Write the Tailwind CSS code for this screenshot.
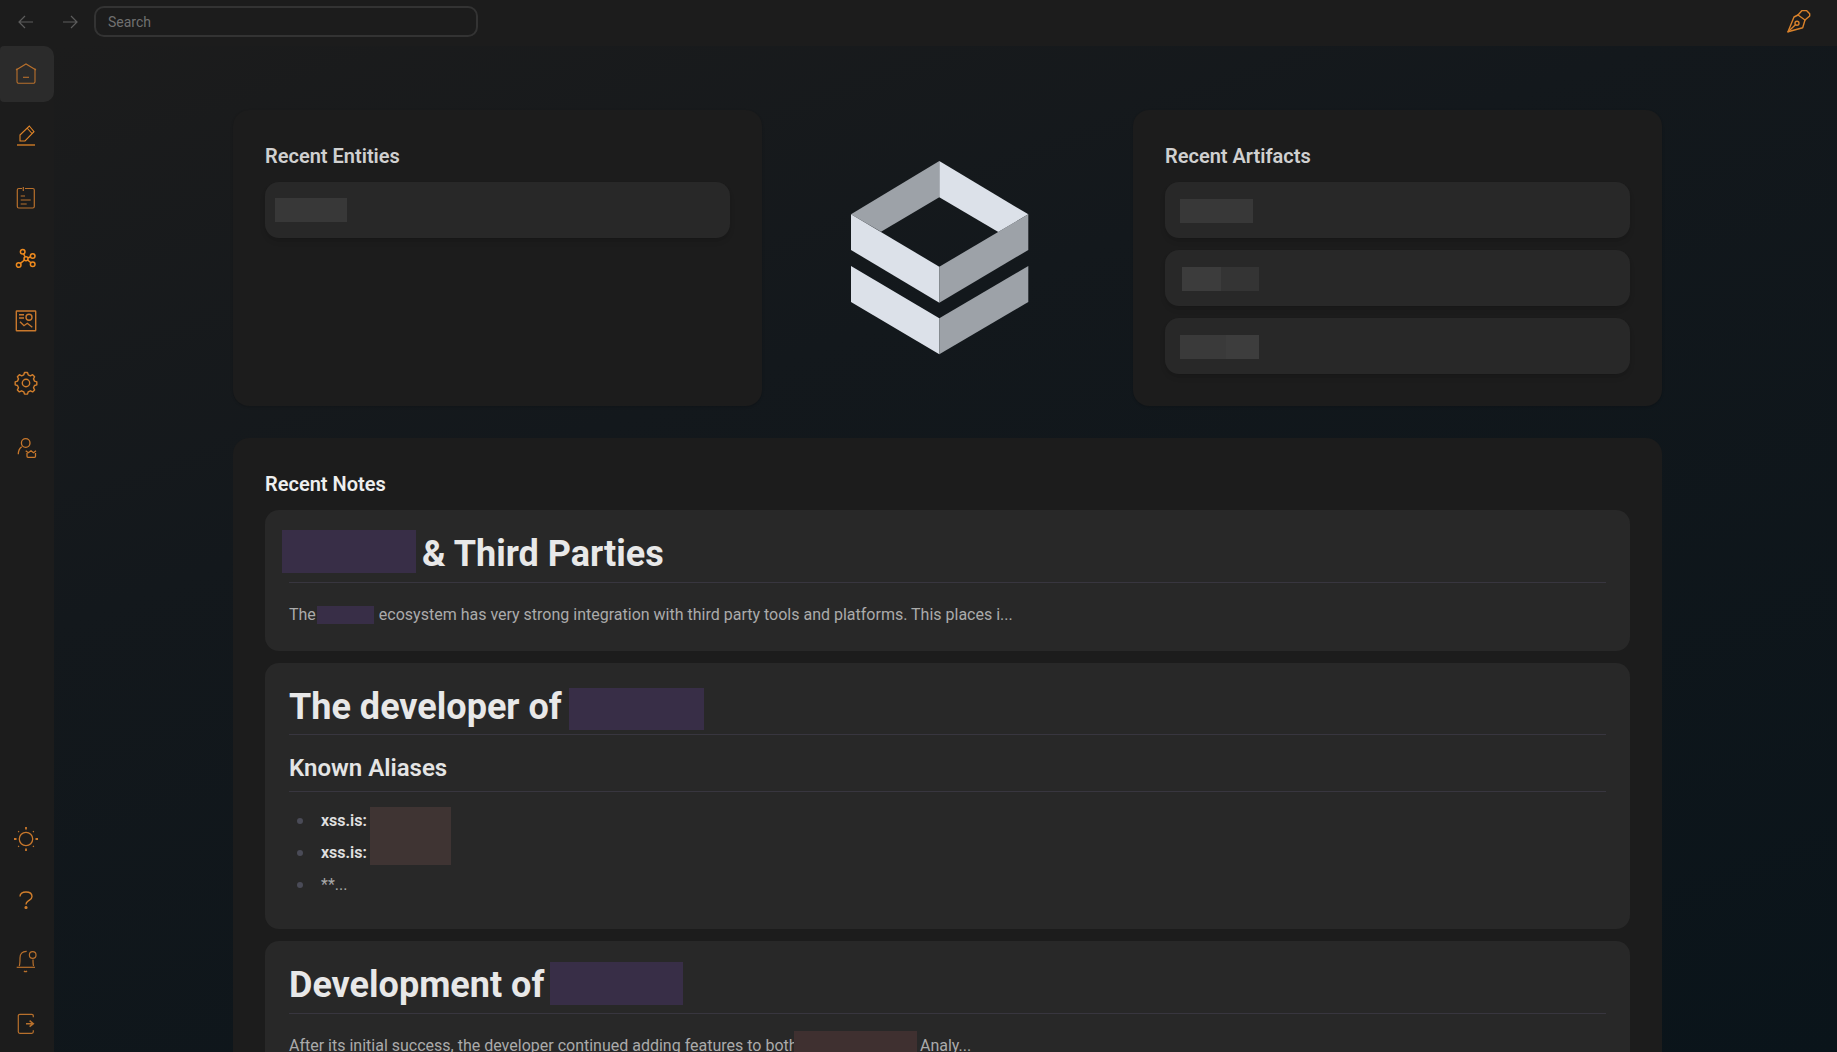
<!DOCTYPE html>
<html lang="en">
<head>
  <meta charset="UTF-8" />
  <title>Dashboard</title>
  <script src="https://cdn.jsdelivr.net/npm/@tailwindcss/browser@4"></script>
</head>
<body class="bg-[#1c1c1c] font-['Roboto',sans-serif]">
  <div class="flex flex-col h-screen overflow-hidden">
    <!-- top bar -->
    <header class="flex items-center h-[46px] shrink-0 pb-[3px] bg-[#1c1c1c] relative">
      <div class="flex items-center w-[94px] shrink-0 pl-[17px] gap-[26px]">
        <svg class="w-[18px] h-[18px] text-[#5c5c5c]" viewBox="0 0 18 18" fill="none" stroke="currentColor" stroke-width="1.2"><path d="M16 9H2M8 3 2 9l6 6"/></svg>
        <svg class="w-[18px] h-[18px] text-[#5c5c5c]" viewBox="0 0 18 18" fill="none" stroke="currentColor" stroke-width="1.2"><path d="M2 9h14M10 3l6 6-6 6"/></svg>
      </div>
      <div class="w-[384px] h-[31px] border-2 border-[#333333] rounded-[10px] flex items-center pl-[12px] pt-[1px] text-[14px] text-[#707070]">Search</div>
      <svg class="w-[24px] h-[24px] ml-auto mr-[26px] text-[#d9822b]" viewBox="0 0 24 24" fill="none" stroke="currentColor" stroke-width="1.4" stroke-linejoin="round" stroke-linecap="round">
        <path d="M1 21.700 7 7 11 5 18 10 15.700 17.700Z"/><path d="M11 5 15 .5H19.500L22.700 3.700V6L18 10"/><circle cx="10" cy="13.300" r="2"/><path d="M1 21.700 8.500 14.800"/>
      </svg>
    </header>

    <div class="flex flex-1 min-h-0">
      <!-- sidebar -->
      <aside class="w-[54px] shrink-0 bg-[#1c1c1c] flex flex-col justify-between -mb-[2px]">
        <nav class="flex flex-col pr-[2px]">
          <a class="h-[56px] -mr-[2px] pr-[2px] flex items-center justify-center bg-[#2b2b2b] rounded-r-[10px] rounded-l-[4px]">
            <svg class="w-[24px] h-[24px] text-[#b8702c]" viewBox="0 0 24 24" fill="none" stroke="currentColor" stroke-width="1.1"><path d="M2 8 12 2l10 6"/><path d="M3 6.500v13a1.800 1.800 0 0 0 1.800 1.800h14.400a1.800 1.800 0 0 0 1.800-1.800v-13"/><path d="M9 15.300h6"/></svg>
          </a>
          <a class="h-[62px] mt-[2px] flex items-center justify-center">
            <svg class="w-[24px] h-[24px] translate-y-[1px] text-[#df8428]" viewBox="0 0 24 24" fill="none" stroke="currentColor" stroke-width="1.1"><path d="M6 11 15.300 2 20 7.700 11 17H6Z"/><path d="M13 4 18 9.500"/><path d="M3 21h18" stroke-width="1.300"/></svg>
          </a>
          <a class="h-[62px] flex items-center justify-center">
            <svg class="w-[24px] h-[24px] translate-y-[1px] text-[#b8702c]" viewBox="0 0 24 24" fill="none" stroke="currentColor" stroke-width="1.200"><path d="M8 2.500H4.800A1.500 1.500 0 0 0 3.300 4v16.500A1.500 1.500 0 0 0 4.800 22h14a1.500 1.500 0 0 0 1.500-1.500V4a1.500 1.500 0 0 0-1.500-1.500H11M9.300 1v4"/><path d="M6.700 10H11M6.700 14h10M6.700 18h6"/></svg>
          </a>
          <a class="h-[62px] flex items-center justify-center">
            <svg class="w-[24px] h-[24px] text-[#ee8a1e]" viewBox="0 0 24 24" fill="none" stroke="currentColor" stroke-width="1.500"><circle cx="8.700" cy="4.700" r="2.300"/><circle cx="18.700" cy="9" r="2.300"/><circle cx="12" cy="11.700" r="2"/><circle cx="4.700" cy="18" r="2.300"/><circle cx="18.700" cy="17.300" r="2.300"/><path d="M9.600 6.800 11 9.800M14 11l2.500-1.200M10.500 13 6.400 16.400M13.700 13 16.900 15.800"/></svg>
          </a>
          <a class="h-[62px] flex items-center justify-center">
            <svg class="w-[24px] h-[24px] text-[#c9782c]" viewBox="0 0 24 24" fill="none" stroke="currentColor" stroke-width="1.400"><rect x="2.300" y="2" width="19.400" height="19.700" rx=".5"/><path d="M5 5.700h5M5 9h5"/><circle cx="15" cy="8.300" r="3"/><path d="M6 12.700l4 4 3.300-2.400 5 4"/></svg>
          </a>
          <a class="h-[62px] flex items-center justify-center">
            <svg class="w-[24px] h-[24px] text-[#d17e2c]" viewBox="0 0 24 24" fill="none" stroke="currentColor" stroke-width="1.400"><path d="M10.500 1.500h3l.7 2.300 2.200 1 2.200-1.100 2 2-1.100 2.200 1 2.200 2.300.7v3l-2.300.7-1 2.200 1.100 2.200-2 2-2.200-1.100-2.200 1-.7 2.300h-3l-.7-2.300-2.200-1-2.200 1.100-2-2 1.100-2.200-1-2.200-2.300-.7v-3l2.300-.7 1-2.200-1.100-2.200 2-2 2.200 1.100 2.200-1Z" stroke-linejoin="round"/><circle cx="12" cy="12" r="3.700"/></svg>
          </a>
          <a class="h-[62px] mt-[3px] flex items-center justify-center">
            <svg class="w-[24px] h-[24px] text-[#c9782c]" viewBox="0 0 24 24" fill="none" stroke="currentColor" stroke-width="1.300"><circle cx="11.700" cy="7" r="4.300"/><path d="M4.300 18.300c0-3.500 1.200-6 3.400-7.600"/><path d="M11.700 14.700 14.300 16.700 17 14.700 19.500 16.700 22 14.700M13 17v3.300a1 1 0 0 0 1 1h6.500a1 1 0 0 0 1-1V17"/></svg>
          </a>
        </nav>
        <nav class="flex flex-col pr-[2px]">
          <a class="h-[61px] flex items-center justify-center">
            <svg class="w-[26px] h-[26px] text-[#c9782c]" viewBox="0 0 26 26" fill="none" stroke="currentColor" stroke-width="1.300"><circle cx="13" cy="13" r="6.700"/><path d="M13 1v2.500M13 22.500V25M1 13h2.500M22.500 13H25" stroke-width="1.800"/><path d="M5.200 5.200l.8.8M20.800 5.200l-.8.8M5.200 20.800l.8-.8M20.800 20.800l-.8-.8"/></svg>
          </a>
          <a class="h-[61px] flex items-center justify-center">
            <svg class="w-[24px] h-[24px] text-[#d17e2c]" viewBox="0 0 24 24" fill="none" stroke="currentColor" stroke-width="1.400"><path d="M6 8.500C6 5.500 8.500 4 12 4s6 1.800 6 4.500c0 2.700-2 3.300-3.800 4.500-1.400 1-2.200 1.500-2.200 3.500"/><circle cx="12" cy="19.500" r=".9" fill="currentColor"/></svg>
          </a>
          <a class="h-[61px] flex items-center justify-center">
            <svg class="w-[24px] h-[24px] text-[#b8702c]" viewBox="0 0 24 24" fill="none" stroke="currentColor" stroke-width="1.200"><path d="M12.700 2.400C8 2.300 6 5 6 9c0 4 0 6.500-.8 8"/><path d="M19 10.500c0 3 0 5 .6 6.500"/><path d="M2.700 18.300H21"/><path d="M10 22c.8.9 2.200.9 3 0"/><circle cx="18.700" cy="6" r="3.300"/></svg>
          </a>
          <a class="h-[61px] mt-[2px] flex items-center justify-center">
            <svg class="w-[24px] h-[24px] text-[#b8702c]" viewBox="0 0 24 24" fill="none" stroke="currentColor" stroke-width="1.200"><path d="M19.300 5.300V3.800a1.500 1.500 0 0 0-1.500-1.500H5.800a1.500 1.500 0 0 0-1.500 1.500v16a1.500 1.500 0 0 0 1.500 1.500h12a1.500 1.500 0 0 0 1.500-1.500v-1.500"/><path d="M12 11.700h7.300M15.600 8.700l3.700 3-3.700 3" stroke-width="1.500"/></svg>
          </a>
        </nav>
      </aside>

      <!-- main -->
      <main class="flex-1 min-w-0 overflow-hidden bg-[linear-gradient(160deg,#1c1c1c_0%,#13181c_35%,#0a141a_100%)] pt-[64px] pl-[179px]">
        <div class="w-[1429px] flex flex-col gap-[32px]">
          <div class="grid grid-cols-[529px_1fr_529px] h-[296px]">
            <section class="bg-[#1c1c1c] rounded-[16px] p-[32px] shadow-sm">
              <h2 class="text-[20px] leading-[28px] font-semibold text-[#d0d0d0] mb-[12px]">Recent Entities</h2>
              <div class="h-[56px] bg-[#282828] rounded-[14px] pl-[10px] flex items-center shadow-md">
                <span class="block w-[72px] h-[24px] bg-[#383838]"></span>
              </div>
            </section>

            <div class="flex items-start justify-center pr-[15px]">
              <!-- logo -->
              <svg class="w-[178px] h-[194px] mt-[51px]" viewBox="851 161 178 194">
                <path fill="#9da2a8" d="M939.300 161 851 214.300 881 231.700 939.300 197.300Z"/>
                <path fill="#dce1e9" d="M939.300 161 1028.300 214.300 998.300 232 939.300 197.300Z"/>
                <path fill="#dce1e9" d="M851 214.300 939.300 266.700V302.700L851 250Z"/>
                <path fill="#9da2a8" d="M1028.300 214.300 939.300 266.700V302.700L1028.300 250Z"/>
                <path fill="#dce1e9" d="M851 266 939.300 318.300V354.300L851 302Z"/>
                <path fill="#9da2a8" d="M1028.300 266 939.300 318.300V354.300L1028.300 302Z"/>
              </svg>
            </div>

            <section class="bg-[#1c1c1c] rounded-[16px] p-[32px] shadow-sm">
              <h2 class="text-[20px] leading-[28px] font-semibold text-[#d0d0d0] mb-[12px]">Recent Artifacts</h2>
              <div class="flex flex-col gap-[12px]">
                <div class="h-[56px] bg-[#282828] rounded-[14px] pl-[15px] flex items-center shadow-md">
                  <span class="block w-[73px] h-[24px] bg-[#383838] translate-y-[1px]"></span>
                </div>
                <div class="h-[56px] bg-[#282828] rounded-[14px] pl-[17px] flex items-center shadow-md">
                  <span class="block w-[39px] h-[24px] bg-[#3c3c3c] translate-y-[1px]"></span>
                  <span class="block w-[38px] h-[24px] bg-[#343434] translate-y-[1px]"></span>
                </div>
                <div class="h-[56px] bg-[#282828] rounded-[14px] pl-[15px] flex items-center shadow-md">
                  <span class="block w-[46px] h-[24px] bg-[#3a3a3a] translate-y-[1px]"></span>
                  <span class="block w-[33px] h-[24px] bg-[#3d3d3d] translate-y-[1px]"></span>
                </div>
              </div>
            </section>
          </div>

          <section class="bg-[#1c1c1c] rounded-[16px] p-[32px] pb-[40px]">
            <h2 class="text-[20px] leading-[28px] font-semibold text-[#eeeeee] mb-[12px]">Recent Notes</h2>
            <div class="flex flex-col gap-[12px]">

              <article class="bg-[#282828] rounded-[14px] h-[141px] px-[24px] pt-[20px]">
                <h1 class="flex items-center h-[43px] text-[36px] font-bold text-[#e8e8e8] -ml-[7px]">
                  <span class="w-[134px] h-[43px] bg-[#382e47] mr-[6px]"></span><span class="translate-y-[2px]">&amp; Third Parties</span>
                </h1>
                <hr class="border-[#38363f] mt-[9px]" />
                <p class="mt-[20px] text-[16px] leading-[24px] text-[#ababab] flex items-center">The<span class="inline-block w-[57px] h-[18px] bg-[#382e47] ml-[1px] mr-[5px]"></span>ecosystem has very strong integration with third party tools and platforms. This places i...</p>
              </article>

              <article class="bg-[#282828] rounded-[14px] h-[266px] px-[24px] pt-[24px]">
                <h1 class="flex items-center h-[43px] text-[36px] font-bold text-[#e8e8e8]">
                  <span class="-translate-y-[2px]">The developer of</span><span class="w-[135px] h-[42px] bg-[#382e47] ml-[7px]"></span>
                </h1>
                <hr class="border-[#38363f] mt-[4px]" />
                <h2 class="mt-[17px] text-[24px] leading-[32px] font-semibold text-[#e4e4e4]">Known Aliases</h2>
                <hr class="border-[#38363f] mt-[7px]" />
                <ul class="relative mt-[13px] text-[16px] leading-[32px] pl-[8px]">
                  <li class="flex items-center font-semibold text-[#e0e0e0]"><span class="w-[6px] h-[6px] rounded-full bg-[#4a4b57] mr-[18px]"></span>xss.is:</li>
                  <li class="flex items-center font-semibold text-[#e0e0e0]"><span class="w-[6px] h-[6px] rounded-full bg-[#4a4b57] mr-[18px]"></span>xss.is:</li>
                  <li class="flex items-center text-[#a8a8a8]"><span class="w-[6px] h-[6px] rounded-full bg-[#4a4b57] mr-[18px]"></span>**...</li>
                  <span class="absolute left-[81px] top-[2px] w-[81px] h-[58px] bg-[#3f3433]"></span>
                </ul>
              </article>

              <article class="bg-[#282828] rounded-[14px] h-[200px] px-[24px] pt-[21px]">
                <h1 class="flex items-center h-[43px] text-[36px] font-bold text-[#e8e8e8]">
                  <span class="translate-y-[1px]">Development of</span><span class="w-[133px] h-[43px] bg-[#382e47] ml-[6px]"></span>
                </h1>
                <hr class="border-[#38363f] mt-[8px]" />
                <p class="mt-[20px] text-[16px] leading-[24px] text-[#ababab] relative">After its initial success, the developer continued adding features to both<span class="absolute left-[505px] top-[-3px] w-[123px] h-[28px] bg-[#3f3030]"></span><span class="absolute left-[631px]">Analy...</span></p>
              </article>
            </div>
          </section>
        </div>
      </main>
    </div>
  </div>
</body>
</html>
